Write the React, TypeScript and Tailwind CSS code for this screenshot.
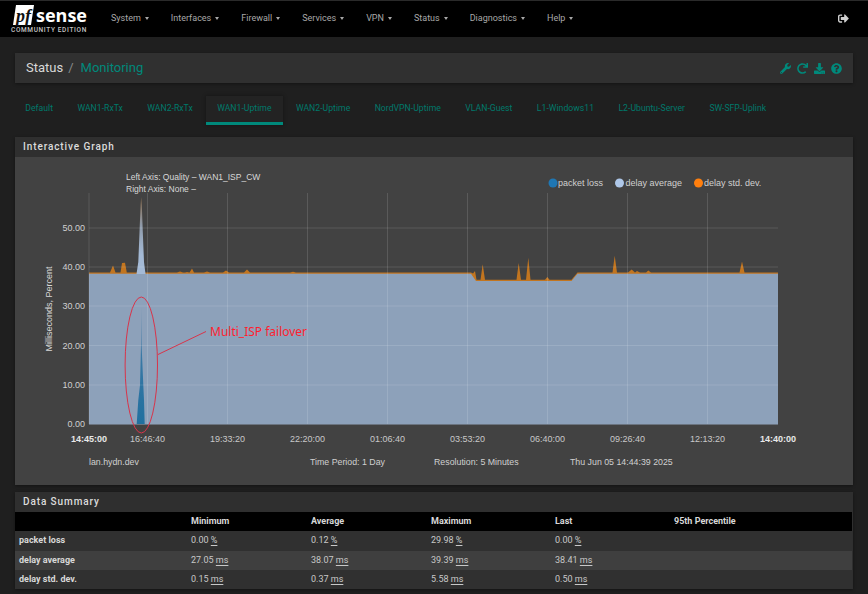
import { FaWrench, FaRedo, FaDownload, FaQuestionCircle, FaSignOutAlt } from 'react-icons/fa'

const menus = ['System', 'Interfaces', 'Firewall', 'Services', 'VPN', 'Status', 'Diagnostics', 'Help']
const tabs = ['Default', 'WAN1-RxTx', 'WAN2-RxTx', 'WAN1-Uptime', 'WAN2-Uptime', 'NordVPN-Uptime', 'VLAN-Guest', 'L1-Windows11', 'L2-Ubuntu-Server', 'SW-SFP-Uplink']

const ticks = [
  { x: 147.5, label: '16:46:40' },
  { x: 227.5, label: '19:33:20' },
  { x: 307.5, label: '22:20:00' },
  { x: 387.5, label: '01:06:40' },
  { x: 467.5, label: '03:53:20' },
  { x: 547.5, label: '06:40:00' },
  { x: 627.5, label: '09:26:40' },
  { x: 707.5, label: '12:13:20' },
]
const levels = [
  { y: 424, label: '0.00' },
  { y: 385, label: '10.00' },
  { y: 345.5, label: '20.00' },
  { y: 306, label: '30.00' },
  { y: 267, label: '40.00' },
  { y: 228, label: '50.00' },
]

const avgLine = '89,273.8 471,273.8 476,281 571.5,281 577.5,273.8 778,273.8'
const stdLine =
  '89,272.5 110,272.5 113,265.5 115.5,272.5 120.5,272.5 122,263 125,262.7 126.8,272.5 177,272.5 180,271.5 183,272.5 185,272.5 187,272 189.5,272.5 190.5,271 192,268.5 194,272.5 204,272.5 207,271.5 210,272.5 223,272.5 226,270.5 229,272.5 244,272.5 247,269.5 250,272.5 290,272.5 293,271.8 296,272.5 471,272.5 473,273.5 475,271 476.5,279.7 480.5,279.7 482.7,264.3 485,279.7 516.5,279.7 518.7,263 521,279.7 526,279.7 528.3,257.7 530.5,279.7 545,279.7 547.3,277 549.5,279.7 571.5,279.7 577.5,272.5 612.5,272.5 614.7,255.7 617,272.5 628,272.5 631.7,269.5 635,272.5 637,271 640,272.5 646,272.5 648.3,270.5 651,272.5 739.5,272.5 742,261.5 744.5,272.5 778,272.5'
const lossLine = '136.7,424 138.3,400 140,385 141,345 141.3,306 141.6,345 143.3,385 144,400 144.7,424'

function Panel({ title, children }: { title: string; children: React.ReactNode }) {
  return (
    <section className="bg-[#2f2f2f] shadow-[0_1px_3px_rgba(0,0,0,0.4)]">
      <h2 className="h-5 px-2 text-[10px] leading-5 font-medium tracking-[0.09em] text-[#dcdcdc]">{title}</h2>
      {children}
    </section>
  )
}

function Chart() {
  return (
    <svg viewBox="15 157 837 296" className="block w-[837px] h-[296px]" fontFamily="'Liberation Sans', sans-serif">
      <defs>
        <linearGradient id="lossFade" x1="0" y1="306" x2="0" y2="424" gradientUnits="userSpaceOnUse">
          <stop offset="0" stopColor="#6a8cab" />
          <stop offset="0.3" stopColor="#3f7aa6" />
          <stop offset="1" stopColor="#20709f" />
        </linearGradient>
        <linearGradient id="spikeFade" x1="0" y1="197" x2="0" y2="255" gradientUnits="userSpaceOnUse">
          <stop offset="0" stopColor="#8a6c4c" />
          <stop offset="0.5" stopColor="#8f9bab" />
          <stop offset="1" stopColor="#a4bad6" />
        </linearGradient>
      </defs>

      <text fontSize="8.5" fill="#d8d8d8">
        <tspan x="126" y="179.5">Left Axis: Quality – WAN1_ISP_CW</tspan>
        <tspan x="126" y="192">Right Axis: None –</tspan>
      </text>

      <g fontSize="9" fill="#d0d0d0">
        <circle cx="553" cy="183" r="4.5" fill="#1f77b4" />
        <text x="558" y="186">packet loss</text>
        <circle cx="619.5" cy="183" r="4.5" fill="#aec7e8" />
        <text x="625.5" y="186">delay average</text>
        <circle cx="698.5" cy="183" r="4.5" fill="#ff7f0e" />
        <text x="704" y="186">delay std. dev.</text>
      </g>

      <polygon points={`89,424 ${stdLine} 778,424`} fill="#c2751f" />
      <polygon points={`89,424 ${avgLine} 778,424`} fill="#8da1ba" />
      <polygon points="136.5,274 138.3,262 139.5,232 140.6,205 141.2,197 141.8,205 142.8,232 144,262 145.5,274" fill="url(#spikeFade)" />
      <polygon points={lossLine} fill="url(#lossFade)" />

      <g stroke="#ffffff" strokeOpacity="0.13" strokeWidth="1">
        <line x1="89" y1="193" x2="89" y2="424" />
        {ticks.map((t) => (
          <line key={t.x} x1={t.x} y1="193" x2={t.x} y2="424" />
        ))}
        {levels.slice(1).map((l) => (
          <line key={l.y} x1="89" y1={l.y} x2="778" y2={l.y} />
        ))}
      </g>
      <line x1="89" y1="424.5" x2="778" y2="424.5" stroke="#6b7480" />

      <g fontSize="9" fill="#d0d0d0" textAnchor="end">
        {levels.map((l) => (
          <text key={l.y} x="85" y={l.y + 3}>{l.label}</text>
        ))}
      </g>
      <text transform="translate(52 309) rotate(-90)" fontSize="9" fill="#d8d8d8" textAnchor="middle">
        Milliseconds, Percent
      </text>

      <g fontSize="9" fill="#c8c8c8" textAnchor="middle">
        {ticks.map((t) => (
          <text key={t.x} x={t.x} y="441.5">{t.label}</text>
        ))}
        <text x="89" y="441.5" fontWeight="700" fill="#e8e8e8">14:45:00</text>
        <text x="778" y="441.5" fontWeight="700" fill="#e8e8e8">14:40:00</text>
      </g>

      <ellipse cx="141.3" cy="365" rx="16.2" ry="68" fill="none" stroke="#d8344a" strokeWidth="1" />
      <line x1="158" y1="354.5" x2="206" y2="331.5" stroke="#d8344a" strokeWidth="1" />
      <text x="210" y="336" fontSize="12" fill="#ff1f2f" fontFamily="'Noto Sans', sans-serif">Multi_ISP failover</text>
    </svg>
  )
}

const rows = [
  { name: 'packet loss', unit: '%', vals: ['0.00', '0.12', '29.98', '0.00'], cls: 'h-[20px] bg-[#303030]' },
  { name: 'delay average', unit: 'ms', vals: ['27.05', '38.07', '39.39', '38.41'], cls: 'h-[19px] bg-[#3f3f3f]' },
  { name: 'delay std. dev.', unit: 'ms', vals: ['0.15', '0.37', '5.58', '0.50'], cls: 'h-[19px] bg-[#303030]' },
]

export default function App() {
  return (
    <div className="w-[868px] h-[594px] overflow-hidden bg-[#1f1f1f] font-['Roboto',sans-serif]">
      <nav className="flex h-[37px] items-center bg-black border-t border-[#2a2a2a] text-[9px] text-[#a8a8a8]">
        <div className="w-[111px] pl-[11px] shrink-0">
          <div className="flex items-center h-[22px]">
            <svg width="25" height="22" viewBox="0 0 25 22" className="shrink-0">
              <polygon points="5,1 23,1 20,21 2,21" fill="#ffffff" />
              <text x="5" y="18" fontSize="18" fontWeight="700" fontStyle="italic" fill="#111111" fontFamily="'Liberation Serif', serif">pf</text>
            </svg>
            <span className="text-[18px] leading-none font-bold text-white font-['Open_Sans',sans-serif]">sense</span>
          </div>
          <div className="text-[6.5px] leading-[7px] mt-px font-medium tracking-[0.1em] text-[#c4c4c4] whitespace-nowrap">COMMUNITY EDITION</div>
        </div>
        {menus.map((m) => (
          <span key={m} className="flex items-center gap-1 mr-[22px] mb-px">
            {m}
            <span className="w-0 h-0 border-x-[2.5px] border-x-transparent border-t-[3px] border-t-[#a8a8a8]" />
          </span>
        ))}
        <FaSignOutAlt className="ml-auto mr-[19px] mb-[2px] text-[11px] text-[#d0d0d0]" />
      </nav>

      <div className="px-[15px] pt-[16px]">
        <div className="flex h-[30px] items-center justify-between bg-[#303030] pl-[11px] pr-[11px] shadow-[0_1px_3px_rgba(0,0,0,0.4)]">
          <div className="flex items-center text-[13px]">
            <span className="text-[#d8d8d8]">Status</span>
            <span className="ml-[5px] mr-[7px] text-[#8a8a8a]">/</span>
            <span className="text-[#00897b]">Monitoring</span>
          </div>
          <div className="flex items-center gap-[6px] text-[11px] text-[#00897b]">
            <FaWrench />
            <FaRedo />
            <FaDownload />
            <FaQuestionCircle />
          </div>
        </div>

        <div className="flex h-[42px] -ml-px items-end gap-[2px] text-[8.7px] text-[#00796b]">
          {tabs.map((t) => (
            <span
              key={t}
              className={
                t === 'WAN1-Uptime'
                  ? 'h-[29px] px-[11.2px] leading-[25px] border-b-[3px] border-[#00897b] bg-[#232323] shadow-[0_0_4px_rgba(0,0,0,0.4)] whitespace-nowrap'
                  : 'h-[29px] px-[11.2px] leading-[25px] whitespace-nowrap'
              }
            >
              {t}
            </span>
          ))}
        </div>

        <div className="mt-3">
          <Panel title="Interactive Graph">
            <div className="bg-[#424242] h-[328px]">
              <Chart />
              <div className="flex pl-[74px] pt-[3px] text-[8.8px] text-[#d0d0d0] font-['Liberation_Sans',sans-serif]">
                <span className="w-[221px]">lan.hydn.dev</span>
                <span className="w-[124px]">Time Period: 1 Day</span>
                <span className="w-[136px]">Resolution: 5 Minutes</span>
                <span>Thu Jun 05 14:44:39 2025</span>
              </div>
            </div>
          </Panel>
        </div>

        <div className="mt-[7px]">
          <Panel title="Data Summary">
            <table className="w-[837px] table-fixed text-[9px] text-[#c8c8c8]">
              <colgroup>
                <col className="w-[176px]" />
                <col className="w-[120px]" />
                <col className="w-[120px]" />
                <col className="w-[124px]" />
                <col className="w-[119px]" />
                <col />
              </colgroup>
              <thead>
                <tr className="h-[19px] bg-black text-left text-[#d8d8d8]">
                  <th className="pl-1" />
                  <th className="font-bold">Minimum</th>
                  <th className="font-bold">Average</th>
                  <th className="font-bold">Maximum</th>
                  <th className="font-bold">Last</th>
                  <th className="font-bold">95th Percentile</th>
                </tr>
              </thead>
              <tbody>
                {rows.map((r) => (
                  <tr key={r.name} className={r.cls}>
                    <td className="pl-1 font-bold text-[#d8d8d8]">{r.name}</td>
                    {r.vals.map((v, i) => (
                      <td key={i}>
                        {v} <span className="underline underline-offset-2">{r.unit}</span>
                      </td>
                    ))}
                    <td />
                  </tr>
                ))}
              </tbody>
            </table>
          </Panel>
        </div>
      </div>
    </div>
  )
}
